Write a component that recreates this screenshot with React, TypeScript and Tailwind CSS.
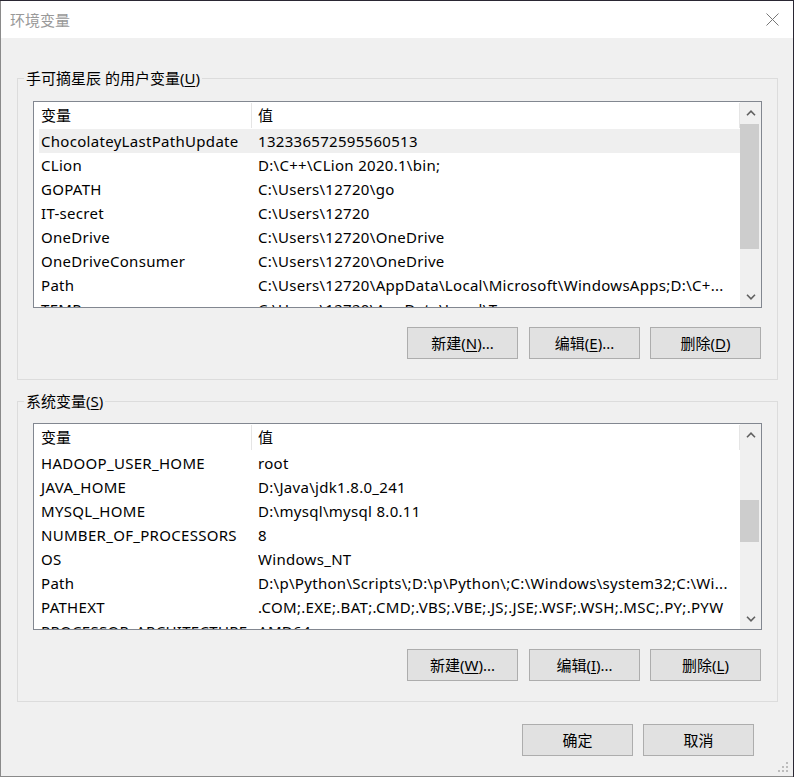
import React from "react";

const FONT = { fontFamily: '"Noto Sans", "Noto Sans CJK SC", sans-serif' };

type Row = [string, string];

const userVars: Row[] = [
  ["ChocolateyLastPathUpdate", "132336572595560513"],
  ["CLion", "D:\\C++\\CLion 2020.1\\bin;"],
  ["GOPATH", "C:\\Users\\12720\\go"],
  ["IT-secret", "C:\\Users\\12720"],
  ["OneDrive", "C:\\Users\\12720\\OneDrive"],
  ["OneDriveConsumer", "C:\\Users\\12720\\OneDrive"],
  ["Path", "C:\\Users\\12720\\AppData\\Local\\Microsoft\\WindowsApps;D:\\C+..."],
  ["TEMP", "C:\\Users\\12720\\AppData\\Local\\Temp"],
];

const sysVars: Row[] = [
  ["HADOOP_USER_HOME", "root"],
  ["JAVA_HOME", "D:\\Java\\jdk1.8.0_241"],
  ["MYSQL_HOME", "D:\\mysql\\mysql 8.0.11"],
  ["NUMBER_OF_PROCESSORS", "8"],
  ["OS", "Windows_NT"],
  ["Path", "D:\\p\\Python\\Scripts\\;D:\\p\\Python\\;C:\\Windows\\system32;C:\\Wi..."],
  ["PATHEXT", ".COM;.EXE;.BAT;.CMD;.VBS;.VBE;.JS;.JSE;.WSF;.WSH;.MSC;.PY;.PYW"],
  ["PROCESSOR_ARCHITECTURE", "AMD64"],
];

function ChevronUp() {
  return (
    <svg width="10" height="6" viewBox="0 0 10 6">
      <polyline points="1,5.2 5,1.2 9,5.2" fill="none" stroke="#606060" strokeWidth="1.6" />
    </svg>
  );
}

function ChevronDown() {
  return (
    <svg width="10" height="6" viewBox="0 0 10 6">
      <polyline points="1,0.8 5,4.8 9,0.8" fill="none" stroke="#606060" strokeWidth="1.6" />
    </svg>
  );
}

function Scrollbar({ thumbTop, thumbHeight }: { thumbTop: number; thumbHeight: number }) {
  return (
    <div className="w-[21px] shrink-0 bg-[#f0f0f0] flex flex-col">
      <div className="h-[21px] flex items-center justify-center shrink-0">
        <ChevronUp />
      </div>
      <div className="flex-1 relative">
        <div
          className="absolute left-0 w-[19px] bg-[#cdcdcd]"
          style={{ top: thumbTop, height: thumbHeight }}
        />
      </div>
      <div className="h-[21px] flex items-center justify-center shrink-0">
        <ChevronDown />
      </div>
    </div>
  );
}

function ListBox({
  rows,
  highlight,
  thumbTop,
  thumbHeight,
}: {
  rows: Row[];
  highlight: number;
  thumbTop: number;
  thumbHeight: number;
}) {
  return (
    <div className="h-[207px] border border-[#828790] bg-white flex overflow-hidden">
      <div className="flex-1 flex flex-col overflow-hidden">
        <div className="h-[27px] shrink-0 flex items-center text-black">
          <div className="w-[218px] h-[25px] pl-[7px] flex items-center border-r border-[#e5e5e5]">
            变量
          </div>
          <div className="flex-1 h-[25px] pl-[6px] flex items-center border-r border-[#e5e5e5]">
            值
          </div>
        </div>
        {rows.map((r, i) => (
          <div
            key={r[0]}
            className={
              "h-[24px] shrink-0 ml-[5px] flex items-center whitespace-nowrap text-black tracking-[0.3px] " +
              (i === highlight ? "bg-[#efefef]" : "")
            }
          >
            <div className="w-[219px] pl-[2px] overflow-hidden">{r[0]}</div>
            <div className="flex-1 overflow-hidden">{r[1]}</div>
          </div>
        ))}
      </div>
      <Scrollbar thumbTop={thumbTop} thumbHeight={thumbHeight} />
    </div>
  );
}

function Button({ children, className = "" }: { children: React.ReactNode; className?: string }) {
  return (
    <div
      className={
        "w-[111px] h-[32px] border border-[#adadad] bg-[#e1e1e1] flex items-center justify-center text-black " +
        className
      }
    >
      {children}
    </div>
  );
}

function Acc({ pre, k, post }: { pre: string; k: string; post: string }) {
  return (
    <span>
      {pre}(<span className="underline underline-offset-[2px]">{k}</span>){post}
    </span>
  );
}

function Group({
  label,
  rows,
  highlight,
  thumbTop,
  thumbHeight,
  buttons,
  className,
}: {
  label: React.ReactNode;
  rows: Row[];
  highlight: number;
  thumbTop: number;
  thumbHeight: number;
  buttons: React.ReactNode;
  className: string;
}) {
  return (
    <div className={"relative ml-[16px] w-[761px] border border-[#dcdcdc] px-[15px] pb-[20px] " + className}>
      <span className="absolute left-[6px] top-[-11px] px-[2px] bg-[#f0f0f0] leading-[20px] text-black">
        {label}
      </span>
      <ListBox rows={rows} highlight={highlight} thumbTop={thumbTop} thumbHeight={thumbHeight} />
      <div className="mt-[19px] pr-[1px] flex justify-end gap-[10px]">{buttons}</div>
    </div>
  );
}

export default function App() {
  return (
    <div className="w-[794px] h-[777px] bg-[#2a2733] pt-[1px] text-[15px]" style={FONT}>
      <div className="relative w-[793px] h-[776px] bg-[#f0f0f0] border-l border-b border-[#8a8a8a] flex flex-col">
        <div className="h-[37px] shrink-0 bg-white flex items-center justify-between pl-[9px] pr-[14px]">
          <span className="text-[#999999] leading-[20px]">环境变量</span>
          <svg width="13" height="13" viewBox="0 0 13 13">
            <line x1="0.5" y1="0.5" x2="12.5" y2="12.5" stroke="#777" strokeWidth="1" />
            <line x1="12.5" y1="0.5" x2="0.5" y2="12.5" stroke="#777" strokeWidth="1" />
          </svg>
        </div>

        <Group
          className="mt-[40px] pt-[22px]"
          label={<Acc pre="手可摘星辰 的用户变量" k="U" post="" />}
          rows={userVars}
          highlight={0}
          thumbTop={1}
          thumbHeight={125}
          buttons={
            <>
              <Button className="mr-[1px]"><Acc pre="新建" k="N" post="..." /></Button>
              <Button><Acc pre="编辑" k="E" post="..." /></Button>
              <Button><Acc pre="删除" k="D" post="" /></Button>
            </>
          }
        />

        <Group
          className="mt-[21px] pt-[21px]"
          label={<Acc pre="系统变量" k="S" post="" />}
          rows={sysVars}
          highlight={-1}
          thumbTop={55}
          thumbHeight={42}
          buttons={
            <>
              <Button className="mr-[1px]"><Acc pre="新建" k="W" post="..." /></Button>
              <Button><Acc pre="编辑" k="I" post="..." /></Button>
              <Button><Acc pre="删除" k="L" post="" /></Button>
            </>
          }
        />

        <div className="mt-[22px] pr-[39px] flex justify-end gap-[10px]">
          <Button>确定</Button>
          <Button>取消</Button>
        </div>

        <svg className="absolute right-[3px] bottom-[2px]" width="12" height="12" viewBox="0 0 12 12">
          <rect x="8" y="0" width="2" height="2" fill="#bcbcbc" />
          <rect x="4" y="4" width="2" height="2" fill="#bcbcbc" />
          <rect x="8" y="4" width="2" height="2" fill="#bcbcbc" />
          <rect x="0" y="8" width="2" height="2" fill="#bcbcbc" />
          <rect x="4" y="8" width="2" height="2" fill="#bcbcbc" />
          <rect x="8" y="8" width="2" height="2" fill="#bcbcbc" />
        </svg>
      </div>
    </div>
  );
}
